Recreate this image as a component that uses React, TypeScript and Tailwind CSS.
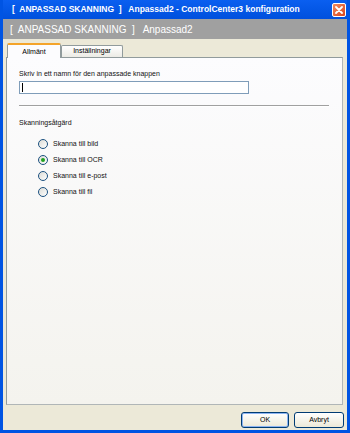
import React from 'react';

const options = ['Skanna till bild', 'Skanna till OCR', 'Skanna till e-post', 'Skanna till fil'];

function Radio({ checked }: { checked: boolean }) {
  return (
    <span className="w-[10px] h-[10px] rounded-full border border-[#1c5180] bg-gradient-to-br from-[#dcdcd6] to-white flex items-center justify-center">
      {checked && <span className="w-[4px] h-[4px] rounded-full bg-[#21a121]" />}
    </span>
  );
}

export default function App() {
  return (
    <div
      className="w-[350px] h-[433px] bg-[#0054e3] px-[3px] pb-[3px] flex flex-col"
      style={{ fontFamily: '"Liberation Sans", Arial, sans-serif' }}
    >
      {/* Title bar */}
      <div className="h-[19px] flex items-center justify-between pl-[9px] pr-[1px] bg-gradient-to-b from-[#0a5ff0] to-[#0050dd]">
        <span className="text-white font-bold text-[8.5px] whitespace-pre">
          [  ANPASSAD SKANNING  ]   Anpassad2 - ControlCenter3 konfiguration
        </span>
        <span className="w-[14px] h-[14px] rounded-[2px] border border-white bg-gradient-to-br from-[#f08a5d] to-[#d9431c] flex items-center justify-center">
          <svg width="8" height="8" viewBox="0 0 8 8">
            <path d="M1 1 L7 7 M7 1 L1 7" stroke="white" strokeWidth="1.8" strokeLinecap="round" />
          </svg>
        </span>
      </div>

      <div className="flex-1 bg-[#ece9d8] flex flex-col">
        {/* Header band */}
        <div className="h-[20px] bg-[#a0a0a0] flex items-center pl-[7px]">
          <span className="text-white text-[10px] whitespace-pre">[  ANPASSAD SKANNING  ]   Anpassad2</span>
        </div>

        {/* Tabs */}
        <div className="ml-[3px] mr-[4px] mt-[4px] flex items-end h-[14px]">
          <div className="ml-[1px] w-[54px] h-[15px] -mb-[1px] relative z-10 bg-[#fcfcfe] border-x border-[#919b9c] border-t-2 border-t-[#f4a42a] rounded-t-[2px] flex items-start justify-center pt-[2px] text-[7px] text-black">
            Allmänt
          </div>
          <div className="w-[62px] h-[12px] bg-gradient-to-b from-white to-[#ecebe5] border border-b-0 border-[#919b9c] rounded-t-[2px] flex items-center justify-center text-[7px] text-black">
            Inställningar
          </div>
        </div>

        {/* Panel */}
        <div className="ml-[3px] mr-[4px] h-[348px] border border-[#919b9c] border-b-[#b0b6b7] border-r-[#b0b6b7] bg-gradient-to-b from-[#fcfcfe] to-[#f4f3ee] pl-[12px] pr-[12px] pt-[10px] text-[7px] text-[#111]">
          <div className="h-[11px] leading-[11px]">Skriv in ett namn för den anpassade knappen</div>
          <div className="mt-[2px] w-[230px] h-[13px] border border-[#7f9db9] bg-white flex items-center pl-[2px]">
            <span className="w-px h-[9px] bg-black" />
          </div>
          <div className="mt-[11px] h-[2px] border-t border-[#a0a0a0] border-b border-b-white mr-[1px]" />
          <div className="mt-[10px] h-[11px] leading-[11px]">Skanningsåtgärd</div>
          <div className="mt-[10px] ml-[19px] flex flex-col gap-[5px]">
            {options.map((o, i) => (
              <div key={o} className="flex items-center gap-[5px] h-[11px]">
                <Radio checked={i === 1} />
                <span className="leading-[11px]">{o}</span>
              </div>
            ))}
          </div>
        </div>

        {/* Buttons */}
        <div className="flex justify-end gap-[5px] mr-[3px] mt-[7px]">
          <button className="w-[48px] h-[16px] rounded-[3px] border border-[#003c74] bg-gradient-to-b from-white to-[#ece9d8] text-[7px] text-black shadow-[inset_0_0_0_1px_#8cb4f2] flex items-center justify-center">
            OK
          </button>
          <button className="w-[50px] h-[16px] rounded-[3px] border border-[#003c74] bg-gradient-to-b from-white to-[#ece9d8] text-[7px] text-black flex items-center justify-center">
            Avbryt
          </button>
        </div>
      </div>
    </div>
  );
}
